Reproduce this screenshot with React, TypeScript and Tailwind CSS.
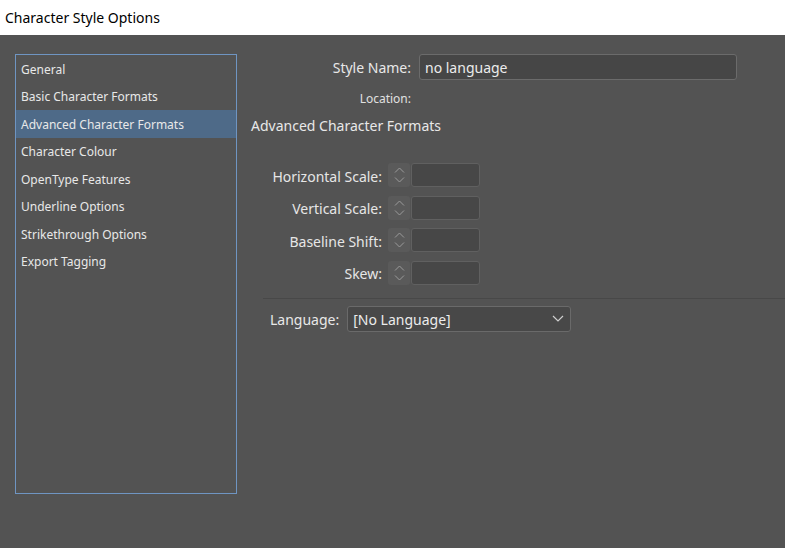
import React from "react";

const font = { fontFamily: '"Noto Sans", "Segoe UI", sans-serif' };

function Spinner() {
  return (
    <div className="w-[22px] h-[24px] rounded-[3px] bg-[#5a5a5a] flex flex-col items-center justify-center gap-[4px]">
      <svg width="11" height="6" viewBox="0 0 11 6" fill="none">
        <path d="M1 5.5 L5.5 1 L10 5.5" stroke="#9a9a9a" strokeWidth="1" />
      </svg>
      <svg width="11" height="6" viewBox="0 0 11 6" fill="none">
        <path d="M1 0.5 L5.5 5 L10 0.5" stroke="#9a9a9a" strokeWidth="1" />
      </svg>
    </div>
  );
}

function FieldRow({ label }: { label: string }) {
  return (
    <div className="flex items-center h-[24px]">
      <div className="w-[131px] text-right text-[14px] text-[#e6e6e6] pt-[2px]">{label}</div>
      <div className="w-[6px]" />
      <Spinner />
      <div className="w-[1px]" />
      <div className="w-[69px] h-[24px] bg-[#474747] border border-[#606060] rounded-[3px]" />
    </div>
  );
}

export default function App() {
  const items = [
    "General",
    "Basic Character Formats",
    "Advanced Character Formats",
    "Character Colour",
    "OpenType Features",
    "Underline Options",
    "Strikethrough Options",
    "Export Tagging",
  ];
  return (
    <div className="w-[785px] h-[548px] bg-[#535353] flex flex-col overflow-hidden" style={font}>
      <div className="h-[35px] bg-white flex items-center pl-[5px] text-[14px] text-black shrink-0">
        Character Style Options
      </div>
      <div className="flex flex-1">
        <div className="pl-[15px] pt-[19px]">
          <div className="w-[222px] h-[440px] border border-[#6f95c2]">
            {items.map((it) => (
              <div
                key={it}
                className={
                  "h-[27.5px] flex items-center pl-[5px] pt-[2px] text-[12px] text-[#e8e8e8] " +
                  (it === "Advanced Character Formats" ? "bg-[#4e6a88]" : "")
                }
              >
                {it}
              </div>
            ))}
          </div>
        </div>
        <div className="flex-1 flex flex-col pl-[14px] pt-[19px]">
          <div className="flex items-center h-[26px]">
            <div className="w-[160px] text-right text-[14px] text-[#e8e8e8]">Style Name:</div>
            <div className="w-[8px]" />
            <div className="w-[318px] h-[26px] bg-[#464646] border border-[#6b6b6b] rounded-[3px] flex items-center pl-[5px] text-[14px] text-[#ececec]">
              no language
            </div>
          </div>
          <div className="flex items-center h-[18px] mt-[10px]">
            <div className="w-[160px] text-right text-[12px] text-[#e0e0e0]">Location:</div>
          </div>
          <div className="h-[20px] mt-[7px] flex items-center text-[14px] text-[#e8e8e8]">
            Advanced Character Formats
          </div>
          <div className="flex flex-col gap-[8.5px] mt-[28px]">
            <FieldRow label="Horizontal Scale:" />
            <FieldRow label="Vertical Scale:" />
            <FieldRow label="Baseline Shift:" />
            <FieldRow label="Skew:" />
          </div>
          <div className="ml-[12px] mt-[13px] h-px bg-[#484848]" />
          <div className="flex items-center ml-[19px] mt-[7px] h-[26px]">
            <div className="text-[14px] text-[#e8e8e8] pt-[1px]">Language:</div>
            <div className="w-[8px]" />
            <div className="w-[224px] h-[26px] bg-[#484848] border border-[#6a6a6a] rounded-[3px] flex items-center justify-between pl-[5px] pr-[6px] text-[14px] text-[#ececec]">
              <span className="pt-[1px]">[No Language]</span>
              <svg width="12" height="7" viewBox="0 0 12 7" fill="none">
                <path d="M1 1 L6 6 L11 1" stroke="#cfcfcf" strokeWidth="1.2" />
              </svg>
            </div>
          </div>
        </div>
      </div>
    </div>
  );
}
